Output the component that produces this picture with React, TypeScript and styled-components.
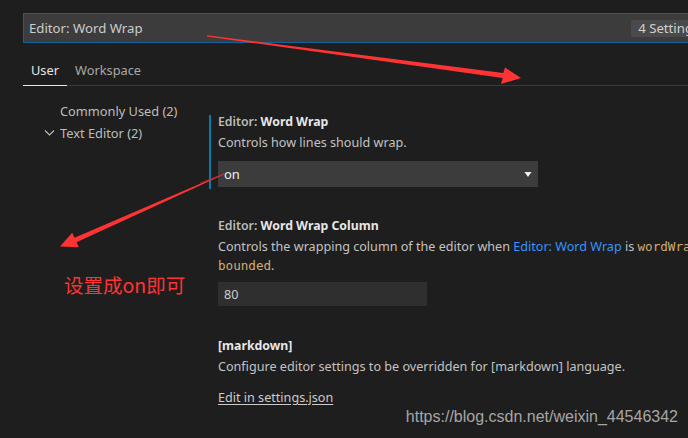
import React from 'react';
import styled, { createGlobalStyle } from 'styled-components';

const GlobalStyle = createGlobalStyle`
  html, body {
    margin: 0;
    padding: 0;
    background: #1e1e1e;
    overflow: hidden;
  }
`;

const Page = styled.div`
  position: relative;
  width: 688px;
  height: 438px;
  overflow: hidden;
  background: #1e1e1e;
  font-family: "Noto Sans", "Open Sans", sans-serif;
  font-size: 12.6px;
  color: #cccccc;
`;

const Header = styled.div`
  padding: 13px 0 0 23px;
`;

const SearchBox = styled.div`
  display: flex;
  align-items: center;
  width: 730px;
  height: 28px;
  border: 1px solid #0e639c;
  background: #3c3c3c;
  padding-left: 5px;
  box-sizing: content-box;
  font-size: 13.2px;
  color: #cccccc;
`;

const Badge = styled.span`
  margin-left: auto;
  margin-right: 10px;
  padding: 0 7px;
  height: 17px;
  line-height: 17px;
  border-radius: 2px;
  background: #4a4a4a;
  color: #d0d0d0;
  white-space: nowrap;
`;

const Tabs = styled.div`
  display: flex;
  margin-top: 12px;
  height: 30px;
  border-bottom: 1px solid #3a3a3a;
`;

const Tab = styled.div<{ $active?: boolean }>`
  display: flex;
  align-items: center;
  padding: 0 8px;
  margin-bottom: -1px;
  font-size: 12.8px;
  color: ${({ $active }) => ($active ? '#e7e7e7' : '#a8a8a8')};
  border-bottom: 1px solid ${({ $active }) => ($active ? '#e7e7e7' : 'transparent')};
`;

const Body = styled.div`
  display: flex;
`;

const Tree = styled.div`
  width: 209px;
  flex-shrink: 0;
  padding-top: 14px;
`;

const TreeItem = styled.div`
  display: flex;
  align-items: center;
  height: 22px;
  padding-left: 44px;
  color: #bdbdbd;
  font-size: 12.8px;
`;

const Twistie = styled.span`
  width: 16px;
  display: flex;
  align-items: center;
`;

const Content = styled.div`
  padding-top: 29px;
  width: 610px;
  flex-shrink: 0;
`;

const Setting = styled.div<{ $focused?: boolean; $gap?: number }>`
  border-left: 2px solid ${({ $focused }) => ($focused ? '#007fae' : 'transparent')};
  padding: 0 0 2px 7px;
  margin-bottom: ${({ $gap }) => $gap ?? 0}px;
`;

const Title = styled.div`
  line-height: 14px;
  font-size: 12.3px;
  font-weight: 600;
  color: #bbbbbb;

  b {
    color: #e7e7e7;
    font-weight: 700;
  }
`;

const Desc = styled.div`
  margin-top: 4px;
  line-height: 19px;
  color: #c3c3c3;
`;

const Link = styled.span`
  color: #3794ff;
`;

const Code = styled.span`
  font-family: "DejaVu Sans Mono", "Liberation Mono", monospace;
  font-size: 12.6px;
  color: #d0ad72;
`;

const Select = styled.div`
  display: flex;
  align-items: center;
  justify-content: space-between;
  margin-top: 9px;
  width: 320px;
  height: 26px;
  padding: 0 6px 0 6px;
  box-sizing: border-box;
  background: #3c3c3c;
  color: #f0f0f0;
  font-size: 13px;
`;

const NumberInput = styled.div`
  display: flex;
  align-items: center;
  margin-top: 7px;
  width: 209px;
  height: 24px;
  padding-left: 6px;
  box-sizing: border-box;
  background: #2f2f2f;
  color: #cccccc;
`;

const EditLink = styled.div`
  margin-top: 12px;
  line-height: 19px;
  color: #cccccc;
  text-decoration: underline;
  text-underline-offset: 2px;
`;

const Overlay = styled.svg`
  position: absolute;
  left: 0;
  top: 0;
  pointer-events: none;
`;

const Note = styled.div`
  position: absolute;
  left: 64px;
  top: 270px;
  font-family: "Noto Sans CJK SC", "Noto Sans", sans-serif;
  font-size: 19.5px;
  color: #ff3333;
  white-space: nowrap;
`;

const Watermark = styled.div`
  position: absolute;
  right: 10px;
  top: 408px;
  font-family: "Liberation Sans", Arial, sans-serif;
  font-size: 16px;
  color: #a6a6a6;
  white-space: nowrap;
`;

export default function App() {
  return (
    <Page>
      <GlobalStyle />
      <Header>
        <SearchBox>
          Editor: Word Wrap
          <Badge>4 Settings Found</Badge>
        </SearchBox>
        <Tabs>
          <Tab $active>User</Tab>
          <Tab>Workspace</Tab>
        </Tabs>
      </Header>
      <Body>
        <Tree>
          <TreeItem>
            <Twistie />
            Commonly Used (2)
          </TreeItem>
          <TreeItem>
            <Twistie>
              <svg width="11" height="8" viewBox="0 0 11 8">
                <polyline points="1,1.5 5.5,6 10,1.5" fill="none" stroke="#bdbdbd" strokeWidth="1.1" />
              </svg>
            </Twistie>
            Text Editor (2)
          </TreeItem>
        </Tree>
        <Content>
          <Setting $focused $gap={30}>
            <Title>
              Editor: <b>Word Wrap</b>
            </Title>
            <Desc>Controls how lines should wrap.</Desc>
            <Select>
              <span>on</span>
              <svg width="8" height="7" viewBox="0 0 8 7">
                <polygon points="0.5,1 7.5,1 4,6" fill="#f0f0f0" />
              </svg>
            </Select>
          </Setting>
          <Setting $gap={31}>
            <Title>
              Editor: <b>Word Wrap Column</b>
            </Title>
            <Desc>
              Controls the wrapping column of the editor when <Link>Editor: Word Wrap</Link> is{' '}
              <Code>wordWrapColumn</Code> or <Code>bounded</Code>.
            </Desc>
            <NumberInput>80</NumberInput>
          </Setting>
          <Setting>
            <Title>
              <b>[markdown]</b>
            </Title>
            <Desc>Configure editor settings to be overridden for [markdown] language.</Desc>
            <EditLink>Edit in settings.json</EditLink>
          </Setting>
        </Content>
      </Body>

      <Overlay width="688" height="438" viewBox="0 0 688 438">
        <polygon
          points="207,35.3 503.3,73 505,67.5 521,78 501,84 502.7,78 207,36.5"
          fill="#ff3333"
        />
        <polygon
          points="224,173.6 74.5,237.7 72.2,232.7 60,246.5 78.8,247.3 76.5,242.3 224,174.4"
          fill="#ff3333"
        />
        <line x1="200" y1="183" x2="224" y2="174" stroke="#b02a2a" strokeWidth="0.8" />
      </Overlay>
      <Note>设置成on即可</Note>
      <Watermark>https://blog.csdn.net/weixin_44546342</Watermark>
    </Page>
  );
}
